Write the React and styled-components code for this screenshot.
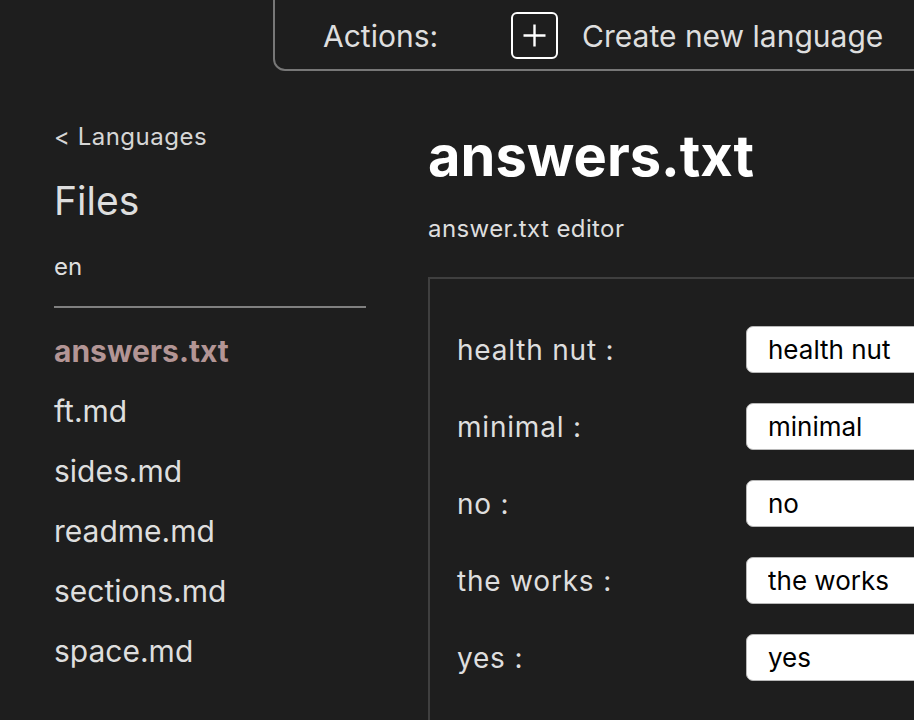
import styled, { createGlobalStyle } from "styled-components";

const GlobalStyle = createGlobalStyle`
  html, body {
    margin: 0;
    padding: 0;
    background: #1e1e1e;
    overflow: hidden;
  }
  body {
    font-family: Inter, "Noto Sans", "Liberation Sans", sans-serif;
    color: #dedede;
  }
`;

const Page = styled.div`
  width: 914px;
  height: 720px;
  overflow: hidden;
`;

const Header = styled.header`
  display: flex;
  padding-left: 273px;
`;

const Toolbar = styled.div`
  flex: 0 0 auto;
  width: 700px;
  height: 89px;
  margin-top: -18px;
  box-sizing: border-box;
  border: 2px solid #777;
  border-radius: 12px;
  display: flex;
  align-items: center;
  padding: 18px 0 0 48px;
  font-size: 30px;
  color: #dedede;
`;

const ActionsLabel = styled.span`
  margin-right: 73px;
`;

const PlusBox = styled.button`
  width: 47px;
  height: 47px;
  box-sizing: border-box;
  border: 2px solid #fff;
  border-radius: 6px;
  background: transparent;
  padding: 0;
  display: flex;
  align-items: center;
  justify-content: center;
  margin-right: 24px;
  cursor: pointer;
`;

const Body = styled.div`
  display: grid;
  grid-template-columns: 312px 1fr;
  column-gap: 62px;
  padding-left: 54px;
`;

const Sidebar = styled.aside`
  display: flex;
  flex-direction: column;
  padding-top: 50px;
`;

const BackLink = styled.a`
  font-size: 24px;
  line-height: 32px;
  letter-spacing: 0.5px;
  color: #d6d6d6;
  text-decoration: none;
`;

const FilesTitle = styled.h2`
  margin: 25px 0 0;
  font-size: 39px;
  line-height: 46px;
  font-weight: 400;
  color: #dedede;
`;

const LangCode = styled.div`
  margin-top: 28px;
  font-size: 24px;
  line-height: 30px;
  color: #dedede;
`;

const Divider = styled.hr`
  margin: 24px 0 0;
  border: none;
  height: 2px;
  background: #808080;
`;

const FileList = styled.ul`
  list-style: none;
  margin: 13px 0 0;
  padding: 0;
  display: flex;
  flex-direction: column;
`;

const FileItem = styled.li`
  font-size: 30px;
  line-height: 60px;
  font-weight: ${(p) => (p.$active ? 700 : 400)};
  color: ${(p) => (p.$active ? "#b39595" : "#dedede")};
`;

const Main = styled.main`
  display: flex;
  flex-direction: column;
  min-width: 700px;
  padding-top: 52px;
`;

const Title = styled.h1`
  margin: 0;
  font-size: 56px;
  line-height: 66px;
  font-weight: 700;
  color: #fff;
`;

const Subtitle = styled.p`
  margin: 25px 0 0;
  font-size: 24px;
  line-height: 30px;
  letter-spacing: 0.4px;
  color: #dedede;
`;

const EditorBox = styled.div`
  margin-top: 33px;
  border: 2px solid #3f3f3f;
  border-right: none;
  padding: 47px 0 60px 27px;
  display: flex;
  flex-direction: column;
  gap: 30px;
`;

const Row = styled.label`
  display: grid;
  grid-template-columns: 289px 1fr;
  align-items: center;
`;

const RowLabel = styled.span`
  font-size: 28px;
  letter-spacing: 0.8px;
  color: #dedede;
`;

const TextInput = styled.input`
  height: 47px;
  width: 400px;
  box-sizing: border-box;
  border: 1px solid #b8b8b8;
  border-radius: 7px;
  background: #fff;
  padding: 0 21px;
  font-family: Inter, "Liberation Sans", sans-serif;
  font-size: 26px;
  color: #000;
  outline: none;
`;

const files = ["answers.txt", "ft.md", "sides.md", "readme.md", "sections.md", "space.md"];
const answers = ["health nut", "minimal", "no", "the works", "yes"];

export default function App() {
  return (
    <Page>
      <GlobalStyle />
      <Header>
        <Toolbar>
          <ActionsLabel>Actions:</ActionsLabel>
          <PlusBox aria-label="Create new language">
            <svg width="25" height="25" viewBox="0 0 25 25">
              <path d="M12.5 1.5v22M1.5 12.5h22" stroke="#fff" strokeWidth="2.4" />
            </svg>
          </PlusBox>
          <span>Create new language</span>
        </Toolbar>
      </Header>
      <Body>
        <Sidebar>
          <BackLink href="#">&lt; Languages</BackLink>
          <FilesTitle>Files</FilesTitle>
          <LangCode>en</LangCode>
          <Divider />
          <FileList>
            {files.map((f, i) => (
              <FileItem key={f} $active={i === 0}>
                {f}
              </FileItem>
            ))}
          </FileList>
        </Sidebar>
        <Main>
          <Title>answers.txt</Title>
          <Subtitle>answer.txt editor</Subtitle>
          <EditorBox>
            {answers.map((a) => (
              <Row key={a}>
                <RowLabel>{a} :</RowLabel>
                <TextInput defaultValue={a} />
              </Row>
            ))}
          </EditorBox>
        </Main>
      </Body>
    </Page>
  );
}
